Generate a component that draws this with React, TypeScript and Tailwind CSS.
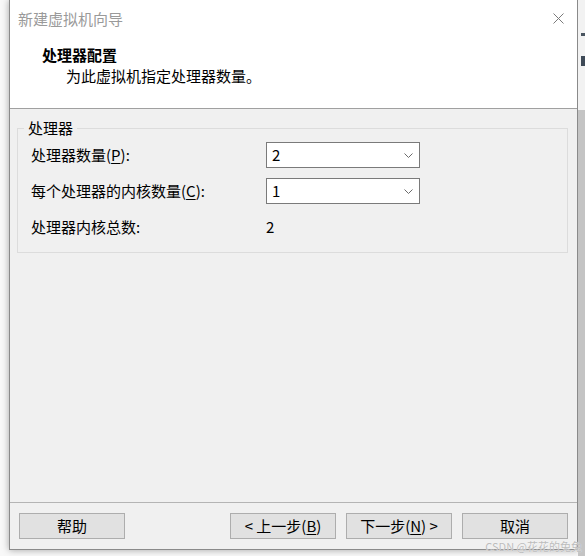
const font = "font-['Microsoft_YaHei_UI','Noto_Sans_CJK_SC','Noto_Sans',sans-serif]";

const Key = ({ k }: { k: string }) => <span className="underline underline-offset-[2px]">{k}</span>;

function Combo({ value }: { value: string }) {
  return (
    <div className="flex h-[26px] w-[154px] items-center justify-between border border-[#7a7a7a] bg-white pl-[5px] pr-[6px]">
      <span>{value}</span>
      <svg width="9" height="5" viewBox="0 0 9 5">
        <polyline points="0.5,0.5 4.5,4.5 8.5,0.5" fill="none" stroke="#6b6b6b" strokeWidth="1" />
      </svg>
    </div>
  );
}

function Btn({ children }: { children: React.ReactNode }) {
  return (
    <button className="flex h-[26px] w-[106px] items-center justify-center border border-[#adadad] bg-[#e1e1e1] leading-[18px]">
      {children}
    </button>
  );
}

export default function App() {
  return (
    <div className={`relative flex h-[556px] w-[585px] overflow-hidden bg-[#f8f8f8] text-[15px] text-black ${font}`}>
      {/* left edge */}
      <div className="w-[9px] shrink-0" />

      {/* dialog */}
      <div className="flex h-[550px] w-[569px] shrink-0 flex-col border-x border-b border-[#8a8a8a] bg-[#f0f0f0] shadow-[0_0_7px_rgba(0,0,0,0.35)]">
        <div className="h-[109px] shrink-0 border-b border-[#a0a0a0] bg-white">
          <div className="flex h-[37px] items-center justify-between pl-[8px] pr-[13px]">
            <span className="leading-[18px] text-[#9a9a9a]">新建虚拟机向导</span>
            <svg width="11" height="11" viewBox="0 0 11 11">
              <path d="M0.5 0.5 L10.5 10.5 M10.5 0.5 L0.5 10.5" stroke="#7a7a7a" strokeWidth="1" fill="none" />
            </svg>
          </div>
          <div className="pl-[32px] pt-[9px] font-bold leading-[18px]">处理器配置</div>
          <div className="pl-[56px] pt-[3px] leading-[18px]">为此虚拟机指定处理器数量。</div>
        </div>

        <div className="flex-1 pl-[7px] pr-[9px] pt-[10px]">
          <fieldset className="border border-[#dcdcdc] pb-[12px]">
            <legend className="ml-[6px] px-[4px] leading-[18px]">处理器</legend>
            <div className="flex flex-col gap-[10px] pl-[13px] pt-[5px]">
              <div className="flex h-[26px] items-center">
                <span className="w-[235px]">
                  处理器数量(<Key k="P" />):
                </span>
                <Combo value="2" />
              </div>
              <div className="flex h-[26px] items-center">
                <span className="w-[235px]">
                  每个处理器的内核数量(<Key k="C" />):
                </span>
                <Combo value="1" />
              </div>
              <div className="flex h-[26px] items-center">
                <span className="w-[235px]">处理器内核总数:</span>
                <span>2</span>
              </div>
            </div>
          </fieldset>
        </div>

        <div className="flex h-[47px] shrink-0 items-center justify-between border-t border-[#b4b4b4] pl-[9px] pr-[9px]">
          <Btn>帮助</Btn>
          <div className="flex gap-[10px]">
            <Btn>
              &lt; 上一步(<Key k="B" />)
            </Btn>
            <Btn>
              下一步(<Key k="N" />) &gt;
            </Btn>
            <Btn>取消</Btn>
          </div>
        </div>
      </div>

      {/* background strip on the right */}
      <div className="flex w-[7px] shrink-0 flex-col">
        <div className="h-[110px] bg-[#f2f2f2] pl-[3px] pt-[33px]">
          <div className="h-[3px] w-[4px] bg-[#4a5560]" />
          <div className="mt-[20px] h-[10px] w-[4px] bg-[#3f4a57]" />
        </div>
        <div className="flex-1 bg-[#c4c4c4]" />
      </div>

      <span className="absolute bottom-[4px] right-[3px] text-[11px] leading-[12px] text-[#bcbcbc] [text-shadow:0_0_1px_#fff]">
        CSDN @花花的兔兔
      </span>
    </div>
  );
}
